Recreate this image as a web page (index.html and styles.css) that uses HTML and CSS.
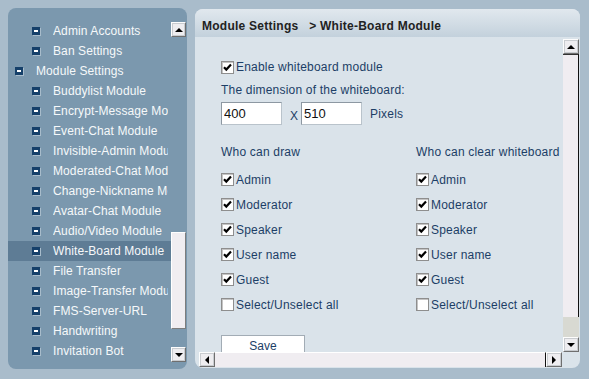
FILE: index.html
```html
<!DOCTYPE html>
<html lang="en">
<head>
    <meta charset="UTF-8">
    <meta name="viewport" content="width=device-width, initial-scale=1.0">
    <title>Module Settings</title>
    <link rel="stylesheet" href="styles.css">
</head>
<body>
<div class="app">
    <div class="nav">
        <ul class="nav-list">
            <li class="nav-item child"><span class="node"></span><span class="nav-text">Admin Accounts</span></li>
            <li class="nav-item child"><span class="node"></span><span class="nav-text">Ban Settings</span></li>
            <li class="nav-item"><span class="node"></span><span class="nav-text">Module Settings</span></li>
            <li class="nav-item child"><span class="node"></span><span class="nav-text">Buddylist Module</span></li>
            <li class="nav-item child"><span class="node"></span><span class="nav-text">Encrypt-Message Module</span></li>
            <li class="nav-item child"><span class="node"></span><span class="nav-text">Event-Chat Module</span></li>
            <li class="nav-item child"><span class="node"></span><span class="nav-text">Invisible-Admin Module</span></li>
            <li class="nav-item child"><span class="node"></span><span class="nav-text">Moderated-Chat Module</span></li>
            <li class="nav-item child"><span class="node"></span><span class="nav-text">Change-Nickname Module</span></li>
            <li class="nav-item child"><span class="node"></span><span class="nav-text">Avatar-Chat Module</span></li>
            <li class="nav-item child"><span class="node"></span><span class="nav-text">Audio/Video Module</span></li>
            <li class="nav-item child active"><span class="node"></span><span class="nav-text">White-Board Module</span></li>
            <li class="nav-item child"><span class="node"></span><span class="nav-text">File Transfer</span></li>
            <li class="nav-item child"><span class="node"></span><span class="nav-text">Image-Transfer Module</span></li>
            <li class="nav-item child"><span class="node"></span><span class="nav-text">FMS-Server-URL</span></li>
            <li class="nav-item child"><span class="node"></span><span class="nav-text">Handwriting</span></li>
            <li class="nav-item child"><span class="node"></span><span class="nav-text">Invitation Bot</span></li>
        </ul>
        <div class="nav-scroll">
            <div class="sb-btn"><span class="arrow up"></span></div>
            <div class="nav-thumb"></div>
            <div class="sb-btn nav-down"><span class="arrow down"></span></div>
        </div>
    </div>

    <div class="main">
        <div class="main-head">Module Settings&nbsp;&nbsp; &gt; White-Board Module</div>
        <div class="main-body">
            <div class="content">
                <div class="opt">
                    <span class="box"><svg width="11" height="11" viewBox="0 0 11 11"><path d="M2 5.2 L4.3 7.6 L9 2.6" fill="none" stroke="#000" stroke-width="2.2"/></svg></span>
                    <span>Enable whiteboard module</span>
                </div>
                <div class="dim-label">The dimension of the whiteboard:</div>
                <div class="dim-row">
                    <input type="text" class="dim-input" value="400">
                    <span class="dim-x">X</span>
                    <input type="text" class="dim-input" value="510">
                    <span class="dim-unit">Pixels</span>
                </div>

                <div class="perm">
                    <div class="perm-col">
                        <div class="perm-title">Who can draw</div>
                        <div class="perm-list">
                            <div class="opt row"><span class="box"><svg width="11" height="11" viewBox="0 0 11 11"><path d="M2 5.2 L4.3 7.6 L9 2.6" fill="none" stroke="#000" stroke-width="2.2"/></svg></span><span>Admin</span></div>
                            <div class="opt row"><span class="box"><svg width="11" height="11" viewBox="0 0 11 11"><path d="M2 5.2 L4.3 7.6 L9 2.6" fill="none" stroke="#000" stroke-width="2.2"/></svg></span><span>Moderator</span></div>
                            <div class="opt row"><span class="box"><svg width="11" height="11" viewBox="0 0 11 11"><path d="M2 5.2 L4.3 7.6 L9 2.6" fill="none" stroke="#000" stroke-width="2.2"/></svg></span><span>Speaker</span></div>
                            <div class="opt row"><span class="box"><svg width="11" height="11" viewBox="0 0 11 11"><path d="M2 5.2 L4.3 7.6 L9 2.6" fill="none" stroke="#000" stroke-width="2.2"/></svg></span><span>User name</span></div>
                            <div class="opt row"><span class="box"><svg width="11" height="11" viewBox="0 0 11 11"><path d="M2 5.2 L4.3 7.6 L9 2.6" fill="none" stroke="#000" stroke-width="2.2"/></svg></span><span>Guest</span></div>
                            <div class="opt row"><span class="box"></span><span>Select/Unselect all</span></div>
                        </div>
                    </div>
                    <div class="perm-col">
                        <div class="perm-title">Who can clear whiteboard</div>
                        <div class="perm-list">
                            <div class="opt row"><span class="box"><svg width="11" height="11" viewBox="0 0 11 11"><path d="M2 5.2 L4.3 7.6 L9 2.6" fill="none" stroke="#000" stroke-width="2.2"/></svg></span><span>Admin</span></div>
                            <div class="opt row"><span class="box"><svg width="11" height="11" viewBox="0 0 11 11"><path d="M2 5.2 L4.3 7.6 L9 2.6" fill="none" stroke="#000" stroke-width="2.2"/></svg></span><span>Moderator</span></div>
                            <div class="opt row"><span class="box"><svg width="11" height="11" viewBox="0 0 11 11"><path d="M2 5.2 L4.3 7.6 L9 2.6" fill="none" stroke="#000" stroke-width="2.2"/></svg></span><span>Speaker</span></div>
                            <div class="opt row"><span class="box"><svg width="11" height="11" viewBox="0 0 11 11"><path d="M2 5.2 L4.3 7.6 L9 2.6" fill="none" stroke="#000" stroke-width="2.2"/></svg></span><span>User name</span></div>
                            <div class="opt row"><span class="box"><svg width="11" height="11" viewBox="0 0 11 11"><path d="M2 5.2 L4.3 7.6 L9 2.6" fill="none" stroke="#000" stroke-width="2.2"/></svg></span><span>Guest</span></div>
                            <div class="opt row"><span class="box"></span><span>Select/Unselect all</span></div>
                        </div>
                    </div>
                </div>

                <button type="button" class="save-btn">Save</button>
            </div>

            <div class="vscroll">
                <div class="sb-btn"><span class="arrow up"></span></div>
                <div class="v-thumb"></div>
                <div class="v-track"></div>
                <div class="sb-btn"><span class="arrow down"></span></div>
            </div>

            <div class="hscroll">
                <div class="sb-btn h"><span class="arrow left"></span></div>
                <div class="h-thumb"></div>
                <div class="sb-btn h"><span class="arrow right"></span></div>
            </div>
        </div>
    </div>
</div>
</body>
</html>
```
FILE: styles.css
```css
body {
    margin: 0;
    padding: 0;
    background-color: #a9bccb;
    font-family: "Liberation Sans", Arial, sans-serif;
    font-size: 12px;
    overflow: hidden;
}
.app {
    display: flex;
    gap: 8px;
    padding: 8px 0 0 8px;
    height: 379px;
    box-sizing: border-box;
}

/* left tree */
.nav {
    display: flex;
    width: 179px;
    height: 361px;
    background: #7b98ae;
    border-radius: 8px;
    overflow: hidden;
}
.nav-list {
    list-style: none;
    margin: 0;
    padding: 13px 0 0 0;
    width: 163px;
}
.nav-item {
    display: flex;
    align-items: center;
    height: 20px;
    padding: 0 3px 0 7px;
    color: #f6f8fa;
    white-space: nowrap;
    letter-spacing: 0.1px;
}
.nav-item.child {
    padding-left: 24px;
}
.nav-item.active {
    background: #5e7c95;
}
.node {
    flex: none;
    position: relative;
    width: 8px;
    height: 8px;
    background: #15406a;
    box-shadow: 1px 1px 0 #a8bccb;
}
.node::after {
    content: "";
    position: absolute;
    left: 2px;
    top: 3px;
    width: 4px;
    height: 2px;
    background: #fff;
}
.nav-text {
    flex: 1;
    min-width: 0;
    overflow: hidden;
    margin-left: 13px;
}
.nav-scroll {
    display: flex;
    flex-direction: column;
    width: 15px;
    padding-top: 14px;
}
.nav-thumb {
    height: 97px;
    margin-top: 195px;
    box-sizing: border-box;
    background: #f0edf1;
    border: 1px solid #fff;
    border-right-color: #7d7d7d;
    border-bottom-color: #7d7d7d;
}
.nav-down {
    margin-top: 18px;
}

/* scrollbar parts */
.sb-btn {
    display: flex;
    align-items: center;
    justify-content: center;
    width: 15px;
    height: 15px;
    box-sizing: border-box;
    background: #eeedf0;
    border: 1px solid #fdfdfd;
    border-right-color: #6f6f6f;
    border-bottom-color: #6f6f6f;
    box-shadow: 0 0 0 1px #c9ccd0 inset;
}
.sb-btn.h {
    width: 16px;
}
.arrow {
    width: 0;
    height: 0;
    border: 3px solid transparent;
}
.arrow.up {
    border-bottom: 4px solid #000;
    border-top: 0;
    border-left-width: 4px;
    border-right-width: 4px;
}
.arrow.down {
    border-top: 4px solid #000;
    border-bottom: 0;
    border-left-width: 4px;
    border-right-width: 4px;
}
.arrow.left {
    border-right: 4px solid #000;
    border-left: 0;
    border-top-width: 4px;
    border-bottom-width: 4px;
}
.arrow.right {
    border-left: 4px solid #000;
    border-right: 0;
    border-top-width: 4px;
    border-bottom-width: 4px;
}

/* right panel */
.main {
    display: flex;
    flex-direction: column;
    width: 385px;
    height: 359px;
    margin-top: 1px;
    background: #dae3ea;
    border-radius: 8px;
    overflow: hidden;
}
.main-head {
    height: 28px;
    box-sizing: border-box;
    padding: 9px 0 0 7px;
    line-height: 16px;
    font-weight: bold;
    color: #222;
    background: linear-gradient(#e1e8ee, #c3d1dc);
    white-space: nowrap;
    letter-spacing: 0.25px;
}
.main-body {
    flex: 1;
    display: grid;
    grid-template-columns: 1fr 16px;
    grid-template-rows: 1fr 15px;
    padding: 2px 1px 1px 4px;
    min-height: 0;
}
.content {
    overflow: hidden;
    padding: 18px 0 0 22px;
    color: #1c3e66;
    min-height: 0;
    letter-spacing: 0.2px;
}
.opt {
    display: flex;
    align-items: center;
    gap: 2px;
    height: 20px;
}
.opt.row {
    height: 25px;
}
.box {
    flex: none;
    display: flex;
    align-items: center;
    justify-content: center;
    width: 13px;
    height: 13px;
    box-sizing: border-box;
    background: #fff;
    border: 1px solid #8e8e8e;
    box-shadow: inset 1px 1px 0 #c4c4c4;
}
.dim-label {
    margin-top: 3px;
    line-height: 20px;
}
.dim-row {
    display: flex;
    align-items: center;
    margin-top: 2px;
    height: 23px;
}
.dim-input {
    width: 61px;
    height: 23px;
    box-sizing: border-box;
    margin: 0;
    padding: 0 2px;
    border: 1px solid #b9c3cb;
    border-top-color: #8d98a2;
    border-left-color: #8d98a2;
    background: #fff;
    font-family: "Liberation Sans", Arial, sans-serif;
    font-size: 13px;
    color: #111;
}
.dim-x {
    margin: 0 3px 0 8px;
    width: 8px;
    padding-top: 4px;
}
.dim-unit {
    margin-left: 8px;
}
.perm {
    display: grid;
    grid-template-columns: 195px auto;
    margin-top: 17px;
}
.perm-title {
    line-height: 20px;
    white-space: nowrap;
}
.perm-list {
    margin-top: 5px;
}
.perm-col .opt {
    white-space: nowrap;
}
.save-btn {
    display: block;
    width: 84px;
    height: 22px;
    margin-top: 18px;
    padding: 0;
    background: #fff;
    border: 1px solid #a2acb5;
    font-family: "Liberation Sans", Arial, sans-serif;
    font-size: 12px;
    color: #1c3e66;
}
.vscroll {
    display: flex;
    flex-direction: column;
    min-height: 0;
}
.vscroll .sb-btn {
    width: 16px;
}
.v-thumb {
    flex: 1;
    background: #f0edf1;
    border-right: 1px solid #111;
    border-top: 1px solid #333;
}
.v-track {
    height: 20px;
    background: #d8d9d2;
}
.hscroll {
    display: flex;
    padding-right: 1px;
}
.h-thumb {
    flex: 1;
    background: #f0edf1;
    border-right: 1px solid #111;
    border-top: 1px solid #fff;
}
```
